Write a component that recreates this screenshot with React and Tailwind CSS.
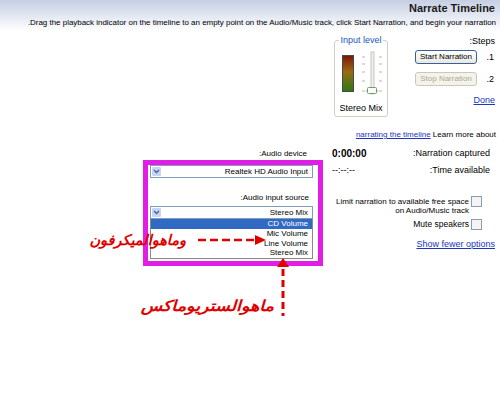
import React from "react";

function Chevron() {
  return (
    <svg width="7" height="5" viewBox="0 0 7 5">
      <path d="M1 1 L3.5 3.5 L6 1" fill="none" stroke="#4d6185" strokeWidth="1.3" />
    </svg>
  );
}

function Combo({ text }) {
  return (
    <div className="flex h-[13px] border border-[#7f9db9] bg-white">
      <div className="w-[9px] m-[1px] bg-[#c6d5f7] rounded-[1px] flex justify-center pt-[2px]">
        <Chevron />
      </div>
      <div className="flex-1 flex items-center justify-end pr-[4px]">{text}</div>
    </div>
  );
}

function Checkbox() {
  return <div className="w-[11px] h-[11px] border border-[#8a9cb4] bg-[#f4f4f4] shrink-0" />;
}

function InputLevel() {
  return (
    <fieldset className="w-[54px] h-[81px] border border-[#d0d0bf] rounded-[3px] flex flex-col items-center">
      <legend className="mx-auto px-[1px] text-[#2455c8] leading-[9px]">Input level</legend>
      <svg width="52" height="52" viewBox="0 0 52 52" className="self-start">
        <defs>
          <linearGradient id="meter" x1="0" y1="0" x2="0" y2="1">
            <stop offset="0" stopColor="#7a1608" />
            <stop offset="0.45" stopColor="#9a6a12" />
            <stop offset="1" stopColor="#2a7a16" />
          </linearGradient>
        </defs>
        <rect x="7.5" y="10.5" width="11" height="36" fill="url(#meter)" stroke="#4a4a40" />
        {[12, 19, 27, 36, 46].map((y) => (
          <g key={y}>
            <line x1="27" y1={y} x2="30" y2={y} stroke="#b5b5b5" />
            <line x1="44" y1={y} x2="47" y2={y} stroke="#b5b5b5" />
          </g>
        ))}
        <rect x="36" y="7" width="3" height="42" fill="#f0f0f0" stroke="#b8b8b0" strokeWidth="0.8" />
        <line x1="31" y1="46" x2="43" y2="46" stroke="#7fae6a" />
        <rect x="32.5" y="42.5" width="9" height="6" rx="1" fill="#fafafa" stroke="#7a9a6a" />
      </svg>
      <div className="mt-[7px] leading-[9px]">Stereo Mix</div>
    </fieldset>
  );
}

export default function App() {
  return (
    <div className="w-[500px] h-[394px] bg-white relative overflow-hidden font-['Liberation_Sans',Arial,sans-serif] text-[9px] text-black leading-[9px]">
      {/* Header */}
      <div className="h-[31px] bg-gradient-to-b from-[#c6cfe3] to-white pr-[4px] pt-[3px] text-right">
        <div className="text-[11px] font-bold leading-[11px] text-[#1a1a1a] pr-[1px]">Narrate Timeline</div>
        <div className="text-[7.95px] mt-[4px] leading-[9px] whitespace-nowrap">
          .Drag the playback indicator on the timeline to an empty point on the Audio/Music track, click Start Narration, and begin your narration
        </div>
      </div>

      {/* Input level + steps */}
      <div className="flex justify-end pr-[3px] mt-[5px]">
        <InputLevel />
        <div className="w-[109px] flex flex-col items-end">
          <div className="mt-[1px] pr-[2px]">:Steps</div>
          <div className="flex items-center mt-[4px]">
            <button className="w-[62px] h-[14px] rounded-[3px] border border-[#3c5f99] bg-gradient-to-b from-white to-[#e8e8e2] text-[8px] leading-none">
              Start Narration
            </button>
            <span className="w-[20px] text-right pr-[3px]">.1</span>
          </div>
          <div className="flex items-center mt-[8px]">
            <button className="w-[62px] h-[14px] rounded-[3px] border border-[#cac8bb] bg-[#f4f3ea] text-[8px] leading-none text-[#aca899]">
              Stop Narration
            </button>
            <span className="w-[20px] text-right pr-[3px]">.2</span>
          </div>
          <a className="mt-[10px] pr-[2px] text-[#2035c0] underline">Done</a>
        </div>
      </div>

      {/* Learn more */}
      <div className="mt-[13px] pr-[4px] text-right text-[8px]">
        <a className="text-[#2035c0] underline">narrating the timeline</a> Learn more about
      </div>

      {/* Main row */}
      <div className="flex justify-end pr-[3px] gap-[9px] mt-[10px]">
        {/* Audio settings */}
        <div className="w-[180px] text-[8px]">
          <div className="text-right pr-[16px]">:Audio device</div>
          <div className="mt-[2px] h-[106px] border-[5px] border-[#e01ee6] pl-[2px] pr-[5px]">
            <Combo text="Realtek HD Audio Input" />
            <div className="mt-[15px] text-right pr-[4px]">:Audio input source</div>
            <div className="mt-[4px]">
              <Combo text="Stereo Mix" />
            </div>
            <div className="border border-t-0 border-[#8a8a8a] text-right">
              <div className="bg-[#316ac5] text-white h-[10px] leading-[10px] pr-[4px]">CD Volume</div>
              <div className="h-[9.5px] leading-[9.5px] pr-[4px]">Mic Volume</div>
              <div className="h-[9.5px] leading-[9.5px] pr-[4px]">Line Volume</div>
              <div className="h-[9.5px] leading-[9.5px] pr-[4px]">Stereo Mix</div>
            </div>
          </div>
        </div>

        {/* Narration info */}
        <div className="w-[165px]">
          <div className="flex justify-between items-center">
            <span className="font-bold text-[10px]">0:00:00</span>
            <span className="pr-[7px]">:Narration captured</span>
          </div>
          <div className="flex justify-between items-center mt-[8px]">
            <span>--:--:--</span>
            <span className="pr-[7px]">:Time available</span>
          </div>
          <div className="flex justify-end items-start gap-[2px] pr-[15px] mt-[21px]">
            <div className="text-right pt-[1px] whitespace-nowrap text-[8px]">
              <div>Limit narration to available free space</div>
              <div>on Audio/Music track</div>
            </div>
            <Checkbox />
          </div>
          <div className="flex justify-end items-center gap-[2px] pr-[15px] mt-[4px]">
            <span className="text-[8.5px]">Mute speakers</span>
            <Checkbox />
          </div>
          <div className="text-right pr-[2px] mt-[10px]">
            <a className="text-[#2035c0] underline">Show fewer options</a>
          </div>
        </div>
      </div>

      {/* Annotations drawn over the screenshot */}
      <div
        dir="rtl"
        className="absolute left-[78px] top-[232px] w-[108px] text-right font-['DejaVu_Sans',sans-serif] font-bold italic text-[14.5px] leading-[16px] text-[#e00000]"
      >
        وماهوالميكرفون
      </div>
      <svg className="absolute left-[195px] top-[234px]" width="75" height="12" viewBox="0 0 75 12">
        <line x1="3" y1="6" x2="62" y2="6" stroke="#e00000" strokeWidth="2.5" strokeDasharray="8 4" />
        <polygon points="60,1 71,6 60,11" fill="#e00000" />
      </svg>
      <svg className="absolute left-[276px] top-[256px]" width="14" height="62" viewBox="0 0 14 62">
        <polygon points="7,2 1,11 13,11" fill="#e00000" />
        <line x1="7" y1="13" x2="7" y2="60" stroke="#e00000" strokeWidth="3" strokeDasharray="7 4" />
      </svg>
      <div
        dir="rtl"
        className="absolute left-[136px] top-[298px] w-[138px] text-right font-['DejaVu_Sans',sans-serif] font-bold italic text-[15px] leading-[17px] text-[#e00000] origin-right scale-x-[1.17]"
      >
        ماهوالستريوماكس
      </div>
    </div>
  );
}
